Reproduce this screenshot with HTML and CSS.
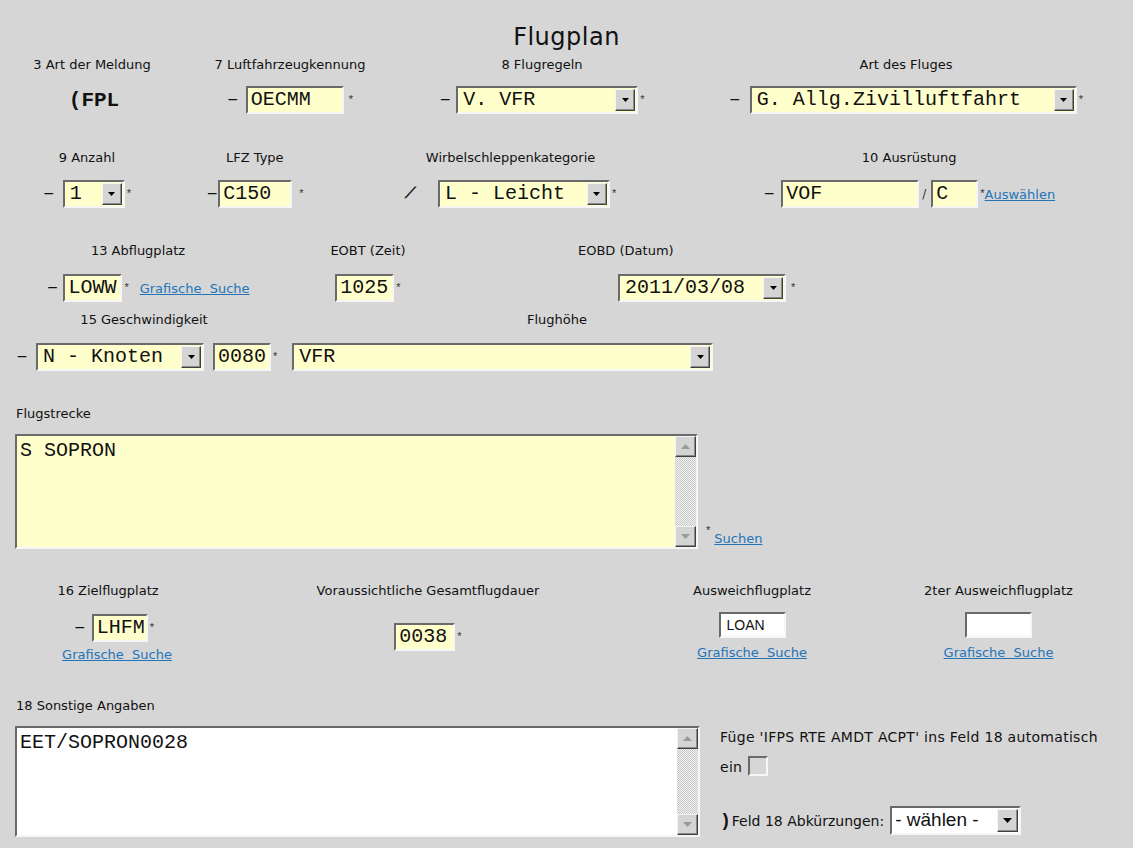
FILE: index.html
```html
<!DOCTYPE html>
<html lang="de">
<head>
<meta charset="utf-8">
<title>Flugplan</title>
<link rel="stylesheet" href="styles.css">
</head>
<body>
<form class="fpl-form">
  <h1 class="title">Flugplan</h1>

  <div class="row r1">
    <div class="cell r1c1">
      <div class="lbl">3 Art der Meldung</div>
      <div class="ctl fpl-wrap"><span class="fpl">(FPL</span></div>
    </div>
    <div class="cell r1c2">
      <div class="lbl">7 Luftfahrzeugkennung</div>
      <div class="ctl"><span class="dash">–</span><span class="inp in-oecmm">OECMM</span><span class="req gap5">*</span></div>
    </div>
    <div class="cell r1c3">
      <div class="lbl">8 Flugregeln</div>
      <div class="ctl"><span class="dash">–</span><span class="sel sel-regeln"><span class="val">V. VFR</span><span class="arr"><svg width="7" height="4" viewBox="0 0 7 4"><path d="M0 0h7L3.5 4z"/></svg></span></span><span class="req gap2">*</span></div>
    </div>
    <div class="cell r1c4">
      <div class="lbl">Art des Fluges</div>
      <div class="ctl"><span class="dash">–</span><span class="sel sel-art"><span class="val">G. Allg.Zivilluftfahrt</span><span class="arr"><svg width="7" height="4" viewBox="0 0 7 4"><path d="M0 0h7L3.5 4z"/></svg></span></span><span class="req gap2">*</span></div>
    </div>
  </div>

  <div class="row r2">
    <div class="cell r2c1">
      <div class="lbl">9 Anzahl</div>
      <div class="ctl"><span class="dash">–</span><span class="sel sel-anzahl"><span class="val">1</span><span class="arr"><svg width="7" height="4" viewBox="0 0 7 4"><path d="M0 0h7L3.5 4z"/></svg></span></span><span class="req gap2">*</span></div>
    </div>
    <div class="cell r2c2">
      <div class="lbl">LFZ Type</div>
      <div class="ctl"><span class="dash">–</span><span class="inp in-type">C150</span><span class="req gap6">*</span></div>
    </div>
    <div class="cell r2c3">
      <div class="lbl">Wirbelschleppenkategorie</div>
      <div class="ctl"><span class="slash">/</span><span class="sel sel-wirbel"><span class="val">L - Leicht</span><span class="arr"><svg width="7" height="4" viewBox="0 0 7 4"><path d="M0 0h7L3.5 4z"/></svg></span></span><span class="req gap2">*</span></div>
    </div>
    <div class="cell r2c4">
      <div class="lbl">10 Ausrüstung</div>
      <div class="ctl"><span class="dash">–</span><span class="inp in-vof">VOF</span><span class="sep">/</span><span class="inp in-c">C</span><span class="req gap2">*</span><a class="link" href="#">Auswählen</a></div>
    </div>
  </div>

  <div class="row r3">
    <div class="cell r3c1">
      <div class="lbl abfl">13 Abflugplatz</div>
      <div class="ctl"><span class="dash">–</span><span class="inp in-lowv">LOWW</span><span class="req gap2">*</span><a class="link gap-link" href="#">Grafische&nbsp; Suche</a></div>
    </div>
    <div class="cell r3c2">
      <div class="lbl">EOBT (Zeit)</div>
      <div class="ctl"><span class="inp in-time">1025</span><span class="req gap2">*</span></div>
    </div>
    <div class="cell r3c3">
      <div class="lbl eobd">EOBD (Datum)</div>
      <div class="ctl eobd-ctl"><span class="sel sel-date"><span class="val">2011/03/08</span><span class="arr"><svg width="7" height="4" viewBox="0 0 7 4"><path d="M0 0h7L3.5 4z"/></svg></span></span><span class="req gap5">*</span></div>
    </div>
  </div>

  <div class="r4">
    <div class="r4-labels">
      <div class="lbl r4l1">15 Geschwindigkeit</div>
      <div class="lbl r4l2">Flughöhe</div>
    </div>
    <div class="ctl r4-ctl"><span class="dash">–</span><span class="sel sel-knoten"><span class="val">N - Knoten</span><span class="arr"><svg width="7" height="4" viewBox="0 0 7 4"><path d="M0 0h7L3.5 4z"/></svg></span></span><span class="inp in-speed">0080</span><span class="req gap2">*</span><span class="sel sel-hoehe"><span class="val">VFR</span><span class="arr"><svg width="7" height="4" viewBox="0 0 7 4"><path d="M0 0h7L3.5 4z"/></svg></span></span></div>
  </div>

  <div class="lbl block-lbl route-lbl">Flugstrecke</div>
  <div class="route-row">
    <div class="ta ta-yellow">
      <div class="ta-text">S SOPRON</div>
      <div class="sb">
        <span class="sb-btn"><svg width="9" height="5" viewBox="0 0 9 5"><path d="M0 5h9L4.5 0z"/></svg></span>
        <span class="sb-track"></span>
        <span class="sb-btn"><svg width="9" height="5" viewBox="0 0 9 5"><path d="M0 0h9L4.5 5z"/></svg></span>
      </div>
    </div>
    <span class="req req-route">*</span><a class="link" href="#">Suchen</a>
  </div>

  <div class="row r5">
    <div class="cell r5c1">
      <div class="lbl">16 Zielflugplatz</div>
      <div class="ctl dest-ctl"><span class="dash">–</span><span class="inp in-dest">LHFM</span><span class="req gap2">*</span></div>
      <a class="link sub-link" href="#">Grafische&nbsp; Suche</a>
    </div>
    <div class="cell r5c2">
      <div class="lbl">Voraussichtliche Gesamtflugdauer</div>
      <div class="ctl eet-ctl"><span class="inp in-eet">0038</span><span class="req gap2">*</span></div>
    </div>
    <div class="cell r5c3">
      <div class="lbl">Ausweichflugplatz</div>
      <div class="ctl alt-ctl"><span class="inp-white">LOAN</span></div>
      <a class="link alt-link" href="#">Grafische&nbsp; Suche</a>
    </div>
    <div class="cell r5c4">
      <div class="lbl">2ter Ausweichflugplatz</div>
      <div class="ctl alt-ctl"><span class="inp-white"></span></div>
      <a class="link alt-link" href="#">Grafische&nbsp; Suche</a>
    </div>
  </div>

  <div class="lbl block-lbl other-lbl">18 Sonstige Angaben</div>
  <div class="other-row">
    <div class="ta ta-white">
      <div class="ta-text">EET/SOPRON0028</div>
      <div class="sb">
        <span class="sb-btn"><svg width="9" height="5" viewBox="0 0 9 5"><path d="M0 5h9L4.5 0z"/></svg></span>
        <span class="sb-track"></span>
        <span class="sb-btn"><svg width="9" height="5" viewBox="0 0 9 5"><path d="M0 0h9L4.5 5z"/></svg></span>
      </div>
    </div>
    <div class="side">
      <div class="side-text">Füge 'IFPS RTE AMDT ACPT' ins Feld 18 automatisch ein <span class="chk"></span></div>
      <div class="abbr"><span class="close">)</span>Feld 18 Abkürzungen:<span class="sel-w"><span class="val">- wählen -</span><span class="arr arr-w"><svg width="9" height="5" viewBox="0 0 9 5"><path d="M0 0h9L4.5 5z"/></svg></span></span></div>
    </div>
  </div>
</form>
</body>
</html>
```

FILE: styles.css
```css
* { box-sizing: border-box; }
html, body { margin: 0; padding: 0; }
body {
  width: 1133px;
  height: 848px;
  overflow: hidden;
  background: #d6d6d6;
  color: #111;
  font-family: "DejaVu Sans", Verdana, sans-serif;
  font-size: 13px;
}
.fpl-form { margin: 0; }
.title {
  margin: 0;
  padding-top: 23px;
  height: 51px;
  line-height: 28px;
  font-size: 24px;
  letter-spacing: 0.5px;
  font-weight: normal;
  text-align: center;
}
.row { display: flex; }
.cell { display: flex; flex-direction: column; align-items: center; }
.lbl { height: 16px; line-height: 16px; white-space: nowrap; }
.ctl { display: flex; align-items: center; height: 28px; white-space: nowrap; }

/* generic controls */
.mono, .dash, .inp, .sel .val, .fpl, .ta-text, .close {
  font-family: "Courier New", "Nimbus Mono PS", "FreeMono", "Liberation Mono", monospace;
}
.dash {
  font-size: 20px;
  width: 12px;
  line-height: 24px;
  color: #111;
}
.slash {
  font-family: "Liberation Mono", monospace;
  font-size: 16px;
  font-weight: bold;
  width: 12px;
  margin-right: 21px;
  transform: skewX(-20deg);
}
.sep { font-size: 12px; margin: 0 5px 0 3px; color: #333; }
.req {
  font-family: "Liberation Sans", Arial, sans-serif;
  font-size: 11px;
  line-height: 11px;
  color: #333;
  align-self: center;
  margin-top: -2px;
}
.gap2 { margin-left: 2px; }
.gap5 { margin-left: 5px; }
.gap6 { margin-left: 7px; }
.inp {
  display: block;
  height: 28px;
  border: 2px solid;
  border-color: #6a6a6a #f6f6f6 #f6f6f6 #6a6a6a;
  background: #ffffcc;
  font-size: 20px;
  line-height: 24px;
  padding: 0 3px;
  white-space: pre;
  overflow: hidden;
}
.sel {
  display: flex;
  height: 28px;
  border: 2px solid;
  border-color: #6a6a6a #f6f6f6 #f6f6f6 #6a6a6a;
  background: #ffffcc;
}
.sel .val {
  flex: 1;
  font-size: 20px;
  line-height: 24px;
  padding-left: 5px;
  white-space: pre;
  overflow: hidden;
}
.arr {
  width: 20px;
  margin: 1px;
  background: #d4d4d4;
  border: 1px solid;
  border-color: #f4f4f4 #404040 #404040 #f4f4f4;
  box-shadow: inset -1px -1px 0 #8a8a8a;
  display: flex;
  align-items: center;
  justify-content: center;
}
.arr svg { fill: #000; }
.link {
  color: #2374b9;
  text-decoration: underline;
  font-size: 13px;
  white-space: nowrap;
}

/* row 1 */
.r1 { margin-top: 6px; }
.r1 .ctl { margin-top: 13px; }
.r1c1 { width: 184px; }
.r1c2 { width: 212px; }
.r1c3 { width: 292px; }
.r1c4 { width: 436px; }
.fpl-wrap { padding-left: 4px; }
.fpl {
  font-weight: bold;
  font-size: 21px;
}
.in-oecmm { width: 98px; margin-left: 7px; }
.sel-regeln { width: 182px; margin-left: 5px; }
.sel-art { width: 327px; margin-left: 9px; }

/* row 2 */
.r2 { margin-top: 36px; }
.r2 .ctl { margin-top: 14px; }
.r2c1 { width: 174px; }
.r2c2 { width: 162px; }
.r2c3 { width: 350px; }
.r2c4 { width: 448px; }
.sel-anzahl { width: 62px; margin-left: 8px; }
.in-type { width: 74px; }
.sel-wirbel { width: 172px; }
.in-vof { width: 138px; margin-left: 6px; }
.in-c { width: 47px; }

/* row 3 */
.r3 { margin-top: 35px; }
.r3 .ctl { margin-top: 15px; }
.r3c1 { width: 296px; }
.r3c2 { width: 144px; }
.r3c3 { width: 693px; align-items: flex-start; }
.abfl { margin-right: 20px; }
.in-lowv { width: 59px; margin-left: 5px; }
.gap-link { margin-left: 11px; }
.in-time { width: 59px; }
.eobd { margin-left: 138px; }
.eobd-ctl { margin-left: 178px; }
.sel-date { width: 168px; }

/* row 4 */
.r4 { margin-top: 10px; }
.r4-labels { display: flex; }
.r4l1 { width: 288px; text-align: center; }
.r4l2 { width: 538px; text-align: center; }
.r4-ctl { margin-top: 15px; padding-left: 16px; }
.sel-knoten { width: 168px; margin-left: 8px; }
.in-speed { width: 58px; margin-left: 9px; }
.sel-hoehe { width: 421px; margin-left: 15px; }

/* textareas */
.block-lbl { padding-left: 16px; }
.route-lbl { margin-top: 35px; }
.route-row { display: flex; align-items: flex-end; margin-top: 12px; padding-left: 15px; }
.ta {
  display: flex;
  border: 2px solid;
  border-color: #6a6a6a #f6f6f6 #f6f6f6 #6a6a6a;
}
.ta-yellow { width: 683px; height: 115px; background: #ffffcc; }
.ta-white { width: 685px; height: 111px; background: #fff; }
.ta-text {
  flex: 1;
  font-size: 20px;
  line-height: 24px;
  padding: 3px 3px;
  white-space: pre;
}
.sb { width: 21px; display: flex; flex-direction: column; }
.sb-btn {
  height: 21px;
  background: #d4d4d4;
  border: 1px solid;
  border-color: #f4f4f4 #404040 #404040 #f4f4f4;
  box-shadow: inset -1px -1px 0 #8a8a8a;
  display: flex;
  align-items: center;
  justify-content: center;
}
.sb-btn svg { fill: #9a9a9a; }
.sb-track {
  flex: 1;
  background: repeating-conic-gradient(#f2f2f2 0 25%, #c8c8c8 0 50%) 0 0 / 2px 2px;
}
.req-route { margin: 0 4px 13px 8px; align-self: flex-end; }
.route-row .link { margin-bottom: 3px; }

/* row 5 */
.r5 { margin-top: 34px; }
.r5c1 { width: 216px; }
.r5c2 { width: 424px; }
.r5c3 { width: 224px; }
.r5c4 { width: 269px; }
.dest-ctl { margin-top: 15px; padding-left: 12px; }
.in-dest { width: 56px; margin-left: 6px; }
.sub-link { margin-top: 5px; line-height: 16px; padding-left: 18px; }
.eet-ctl { margin-top: 24px; }
.in-eet { width: 61px; }
.alt-ctl { margin-top: 13px; height: 26px; }
.inp-white {
  display: block;
  width: 67px;
  height: 26px;
  border: 2px solid;
  border-color: #6a6a6a #f6f6f6 #f6f6f6 #6a6a6a;
  background: #fff;
  font-family: "Liberation Sans", Arial, sans-serif;
  font-size: 14px;
  line-height: 22px;
  padding-left: 6px;
}
.alt-link { margin-top: 7px; line-height: 16px; }

/* bottom */
.other-lbl { margin-top: 35px; }
.other-row { display: flex; margin-top: 12px; padding-left: 15px; }
.side { margin-left: 20px; margin-top: -4px; display: flex; flex-direction: column; }
.side-text {
  width: 380px;
  font-size: 14px;
  letter-spacing: 0.3px;
  line-height: 30px;
}
.chk {
  display: inline-block;
  width: 20px;
  height: 20px;
  vertical-align: -4px;
  border: 2px solid;
  border-color: #6a6a6a #f6f6f6 #f6f6f6 #6a6a6a;
  background: #d6d6d6;
  margin-left: 1px;
}
.abbr {
  display: flex;
  align-items: center;
  margin-top: 24px;
  font-size: 14px;
  white-space: nowrap;
}
.close {
  font-weight: bold;
  font-size: 18px;
  margin-right: 1px;
}
.sel-w {
  display: flex;
  width: 131px;
  height: 29px;
  margin-left: 6px;
  border: 2px solid;
  border-color: #6a6a6a #f6f6f6 #f6f6f6 #6a6a6a;
  background: #fff;
}
.sel-w .val {
  flex: 1;
  font-family: "Liberation Sans", Arial, sans-serif;
  font-size: 19px;
  line-height: 24px;
  padding-left: 3px;
  white-space: pre;
}
.arr-w { width: 21px; }
```
